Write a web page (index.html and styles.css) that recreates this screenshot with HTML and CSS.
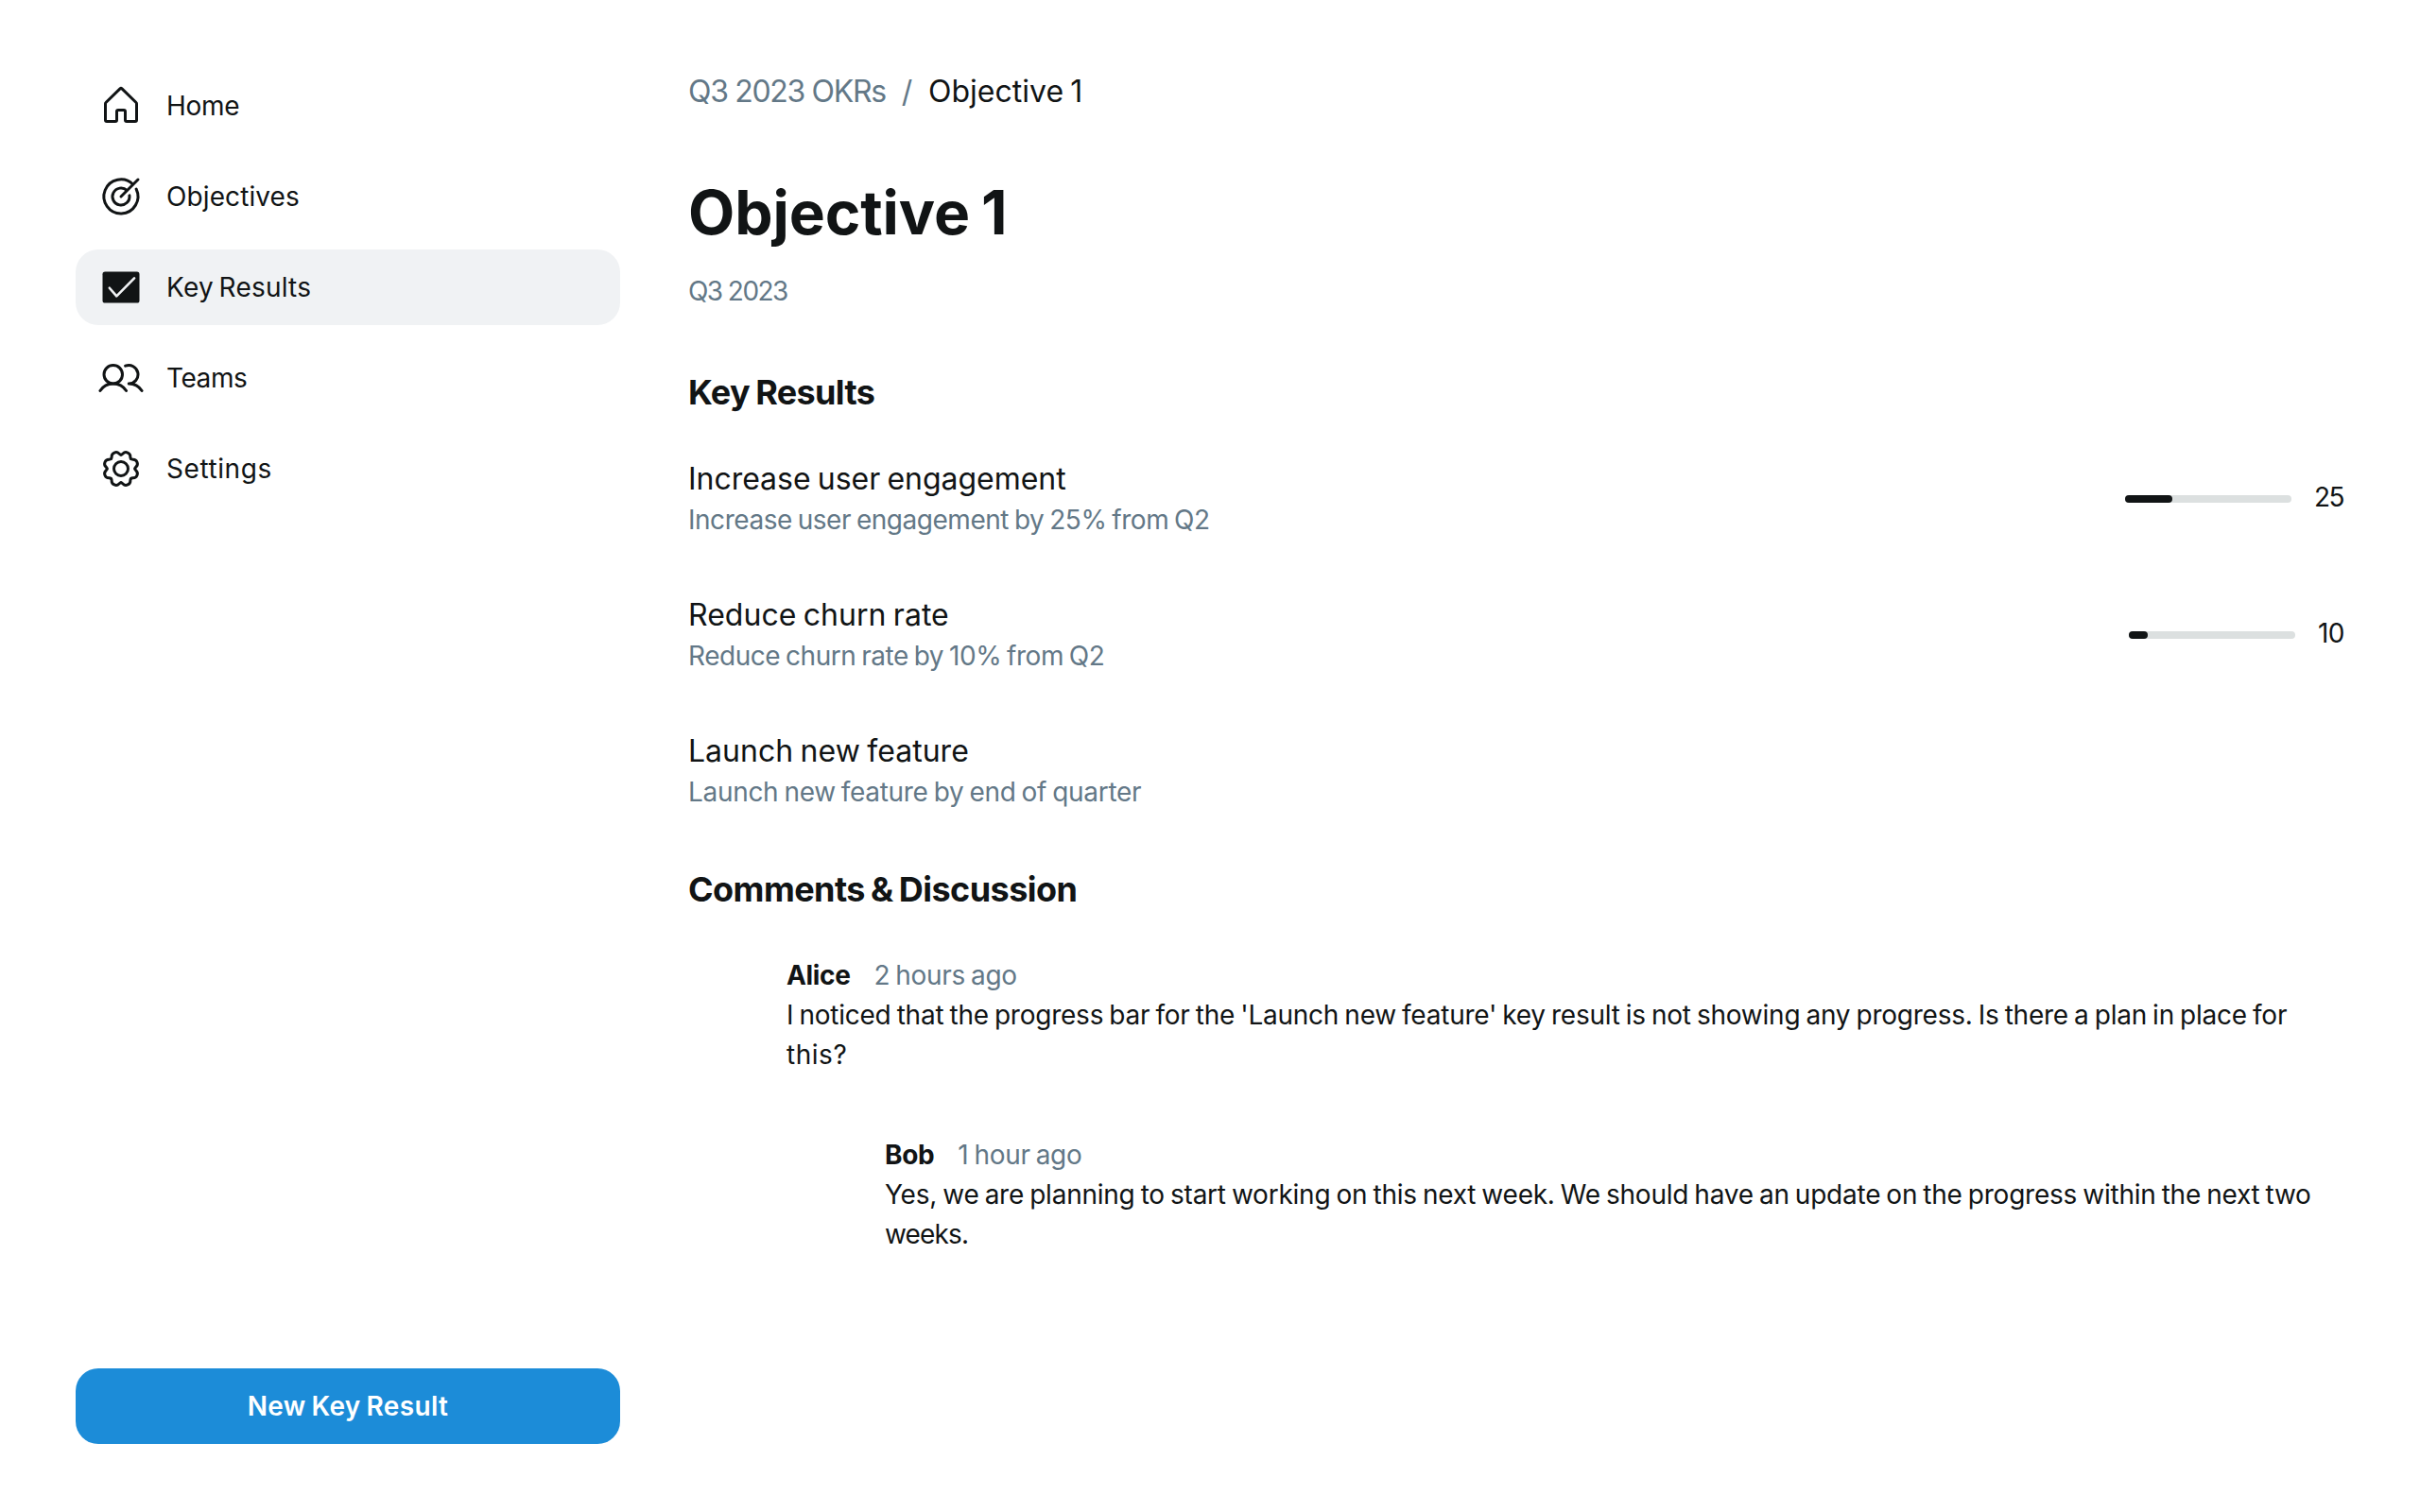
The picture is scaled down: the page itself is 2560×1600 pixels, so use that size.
FILE: index.html
```
<!DOCTYPE html>
<html lang="en">
<head>
<meta charset="utf-8">
<title>Objective 1</title>
<link rel="stylesheet" href="styles.css">
</head>
<body>
<div class="app">
  <aside class="sidebar">
    <nav class="nav">
      <a class="nav-item">
        <svg class="icon" viewBox="0 0 256 256"><path d="M152 208v-48a8 8 0 0 0-8-8h-32a8 8 0 0 0-8 8v48a8 8 0 0 1-8 8H48a8 8 0 0 1-8-8V115.500a8 8 0 0 1 2.600-5.900l80-78.500a8 8 0 0 1 10.800 0l80 78.500a8 8 0 0 1 2.600 5.900V208a8 8 0 0 1-8 8h-48a8 8 0 0 1-8-8Z"/></svg>
        <span class="t-home">Home</span>
      </a>
      <a class="nav-item">
        <svg class="icon" viewBox="0 0 256 256"><path d="M128 128 224 32M195.900 60.100A96 96 0 1 0 213.800 85.300M161.900 94.100A48 48 0 1 0 175.600 122"/></svg>
        <span class="t-objectives">Objectives</span>
      </a>
      <a class="nav-item active">
        <svg class="icon" viewBox="0 0 256 256"><rect class="box" x="24" y="40" width="208" height="176" rx="14"/><path class="tick" d="M63 132 103 178 203 77"/></svg>
        <span class="t-results">Key Results</span>
      </a>
      <a class="nav-item">
        <svg class="icon" viewBox="0 0 256 256"><circle cx="84" cy="108" r="52"/><path d="M10.200 200a88 88 0 0 1 147.500 0M172 160a88 88 0 0 1 73.800 40M152.700 59.700A52 52 0 1 1 172 160"/></svg>
        <span class="t-teams">Teams</span>
      </a>
      <a class="nav-item">
        <svg class="icon" viewBox="0 0 256 256">
          <defs><path id="tooth" d="M-30.200-73C-18.200-78-27-98 0-98C27-98 18.200-78 30.200-73"/></defs>
          <circle cx="128" cy="128" r="40"/>
          <g transform="translate(128 128) rotate(22.500)">
            <use href="#tooth"/><use href="#tooth" transform="rotate(45)"/><use href="#tooth" transform="rotate(90)"/><use href="#tooth" transform="rotate(135)"/><use href="#tooth" transform="rotate(180)"/><use href="#tooth" transform="rotate(225)"/><use href="#tooth" transform="rotate(270)"/><use href="#tooth" transform="rotate(315)"/>
          </g>
        </svg>
        <span class="t-settings">Settings</span>
      </a>
    </nav>
    <button class="new-result">New Key Result</button>
  </aside>

  <main class="content">
    <div class="breadcrumb"><a class="crumb">Q3 2023 OKRs</a><span class="slash">/</span><span class="current">Objective 1</span></div>
    <h1 class="title">Objective 1</h1>
    <p class="period">Q3 2023</p>

    <h2 class="heading h-results">Key Results</h2>
    <section class="results">
      <div class="result">
        <div class="result-text">
          <p class="result-name">Increase user engagement</p>
          <p class="result-note">Increase user engagement by 25% from Q2</p>
        </div>
        <div class="progress">
          <div class="track"><div class="fill" style="width:50px"></div></div>
          <span class="value v25">25</span>
        </div>
      </div>
      <div class="result">
        <div class="result-text">
          <p class="result-name n-name">Reduce churn rate</p>
          <p class="result-note n-churn">Reduce churn rate by 10% from Q2</p>
        </div>
        <div class="progress">
          <div class="track"><div class="fill" style="width:20px"></div></div>
          <span class="value v10">10</span>
        </div>
      </div>
      <div class="result">
        <div class="result-text">
          <p class="result-name n-name">Launch new feature</p>
          <p class="result-note n-launch">Launch new feature by end of quarter</p>
        </div>
      </div>
    </section>

    <h2 class="heading h-comments">Comments &amp; Discussion</h2>
    <section class="comments">
      <article class="comment">
        <div class="comment-head"><span class="author">Alice</span><span class="time">2 hours ago</span></div>
        <p class="comment-body">I noticed that the progress bar for the 'Launch new feature' key result is not showing any progress. Is there a plan in place for <span class="t-this">this?</span></p>
      </article>
      <article class="comment reply">
        <div class="comment-head"><span class="author">Bob</span><span class="time">1 hour ago</span></div>
        <p class="comment-body">Yes, we are planning to start working on this next week. We should have an update on the progress within the next two <span class="t-weeks">weeks.</span></p>
      </article>
    </section>
  </main>
</div>
</body>
</html>
```
FILE: styles.css
```
* { box-sizing: border-box; margin: 0; padding: 0; }

body {
  background: #fff;
  color: #111415;
  font-family: "Inter", "Liberation Sans", sans-serif;
  font-size: 28px;
  line-height: 42px;
  word-spacing: -1.5px;
}

.app { display: flex; height: 1600px; width: 2560px; }

/* Sidebar */
.sidebar {
  width: 728px;
  padding: 72px 72px 72px 80px;
  display: flex;
  flex-direction: column;
  justify-content: space-between;
}
.nav { display: flex; flex-direction: column; gap: 16px; }
.nav-item {
  display: flex;
  align-items: center;
  gap: 24px;
  height: 80px;
  padding: 0 24px;
  border-radius: 24px;
}
.active { background: #f0f2f4; }
.t-home { letter-spacing: -0.3px; }
.t-objectives { letter-spacing: 0.1px; }
.t-results { letter-spacing: 0.2px; word-spacing: -2.3px; }
.t-teams { letter-spacing: -0.43px; }
.t-settings { letter-spacing: 0.58px; }

.icon {
  width: 48px;
  height: 48px;
  flex: none;
  fill: none;
  stroke: #111415;
  stroke-width: 16;
  stroke-linecap: round;
  stroke-linejoin: round;
}
.icon .box { fill: #111415; stroke: none; }
.icon .tick { stroke: #f0f2f4; stroke-width: 14; }

.new-result {
  height: 80px;
  border: 0;
  border-radius: 24px;
  background: #1c8cd8;
  color: #fff;
  font: 600 28px/42px "Inter", "Liberation Sans", sans-serif;
  letter-spacing: 0.35px;
  word-spacing: -1.5px;
}

/* Main column */
.content { width: 1752px; padding-top: 73px; }
.breadcrumb {
  display: flex;
  font-size: 32px;
  line-height: 48px;
}
.crumb { width: 208px; color: #637887; letter-spacing: -1.33px; word-spacing: 0; white-space: nowrap; }
.slash { width: 46px; padding-left: 1px; text-align: center; color: #637887; }
.current { letter-spacing: 0.02px; word-spacing: -2px; }
.title { margin-top: 64px; font-size: 64px; line-height: 80px; font-weight: 700; letter-spacing: -0.1px; word-spacing: -3px; }
.period { margin-top: 22px; color: #637887; letter-spacing: -1.57px; word-spacing: 0; }
.heading { font-size: 36px; line-height: 46px; font-weight: 700; word-spacing: -1.8px; }
.h-results { margin-top: 63px; letter-spacing: -0.63px; }
.h-comments { margin-top: 31px; letter-spacing: -0.56px; }

.results { margin-top: 17px; }
.result { display: flex; align-items: center; justify-content: space-between; height: 144px; }
.result-name { padding-top: 1px; font-size: 32px; line-height: 45px; letter-spacing: -0.03px; word-spacing: -1.7px; }
.n-name { letter-spacing: 0.03px; }
.result-note { color: #637887; letter-spacing: -0.47px; }
.n-churn { letter-spacing: -0.47px; }
.n-launch { letter-spacing: -0.31px; }

.progress { display: flex; align-items: center; gap: 24px; padding-bottom: 2px; }
.track { width: 176px; height: 8px; margin-top: 4px; border-radius: 4px; background: #dce0e0; }
.fill { height: 8px; border-radius: 4px; background: #111415; }
.value { white-space: nowrap; }
.v25 { width: 32px; letter-spacing: -1.5px; }
.v10 { width: 28px; letter-spacing: -0.7px; }

/* Comments */
.comments { display: flex; flex-direction: column; gap: 64px; margin-top: 47px; padding: 0 16px 0 104px; }
.reply { padding-left: 104px; }
.comment-head { display: flex; gap: 25px; }
.author { font-weight: 700; letter-spacing: -0.34px; }
.time { color: #637887; letter-spacing: -0.32px; }
.comment-body { letter-spacing: -0.235px; }
.t-this { letter-spacing: 0.53px; }
.t-weeks { letter-spacing: -0.84px; }
```
